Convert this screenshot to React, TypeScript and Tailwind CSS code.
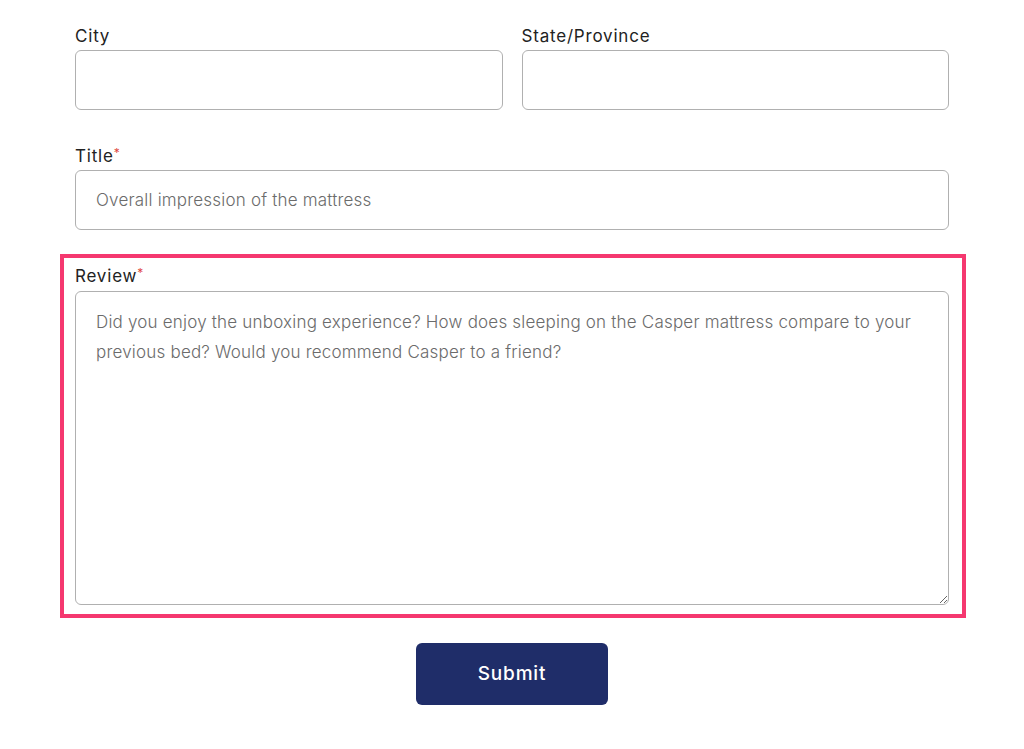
import React from 'react';

function Label({ text, required }: { text: string; required?: boolean }) {
  return (
    <label className="block h-[24px] text-[17px] leading-[24px] tracking-[0.8px] text-[#222] mb-[2px]">
      {text}
      {required && <span className="text-[12px] align-top leading-[18px] text-[#e0483f]">*</span>}
    </label>
  );
}

export default function App() {
  return (
    <div className="min-h-screen bg-white px-[75px] pt-[24px] font-['Inter',sans-serif]">
      <div className="grid grid-cols-2 gap-[19px]">
        <div>
          <Label text="City" />
          <input
            type="text"
            className="block w-full h-[60px] rounded-[6px] border border-[#b0b0b0] px-[20px] text-[17px] outline-none"
          />
        </div>
        <div>
          <Label text="State/Province" />
          <input
            type="text"
            className="block w-full h-[60px] rounded-[6px] border border-[#b0b0b0] px-[20px] text-[17px] outline-none"
          />
        </div>
      </div>

      <div className="mt-[34px]">
        <Label text="Title" required />
        <input
          type="text"
          placeholder="Overall impression of the mattress"
          className="block w-full h-[60px] rounded-[6px] border border-[#b0b0b0] px-[20px] text-[17px] font-light tracking-[0.2px] text-[#333] placeholder:text-[#6b6b6b] outline-none"
        />
      </div>

      <div className="mt-[24px] -ml-[15px] -mr-[17px] border-4 border-[#f5386f] pl-[11px] pr-[13px] pt-[6px] pb-[9px]">
        <div className="h-[24px] text-[17px] leading-[24px] tracking-[0.8px] text-[#222] mb-[3px]">
          Review<span className="text-[12px] align-top leading-[18px] text-[#e0483f]">*</span>
        </div>
        <textarea
          placeholder="Did you enjoy the unboxing experience? How does sleeping on the Casper mattress compare to your previous bed? Would you recommend Casper to a friend?"
          className="block w-full h-[314px] rounded-[6px] border border-[#b0b0b0] px-[20px] pt-[15px] text-[17px] leading-[30px] font-light tracking-[0.2px] text-[#333] placeholder:text-[#6b6b6b] outline-none"
        />
      </div>

      <div className="mt-[25px] flex justify-center">
        <button className="w-[192px] h-[62px] rounded-[6px] bg-[#1f2d69] text-white text-[19px] font-medium tracking-[0.8px]">
          Submit
        </button>
      </div>
    </div>
  );
}
